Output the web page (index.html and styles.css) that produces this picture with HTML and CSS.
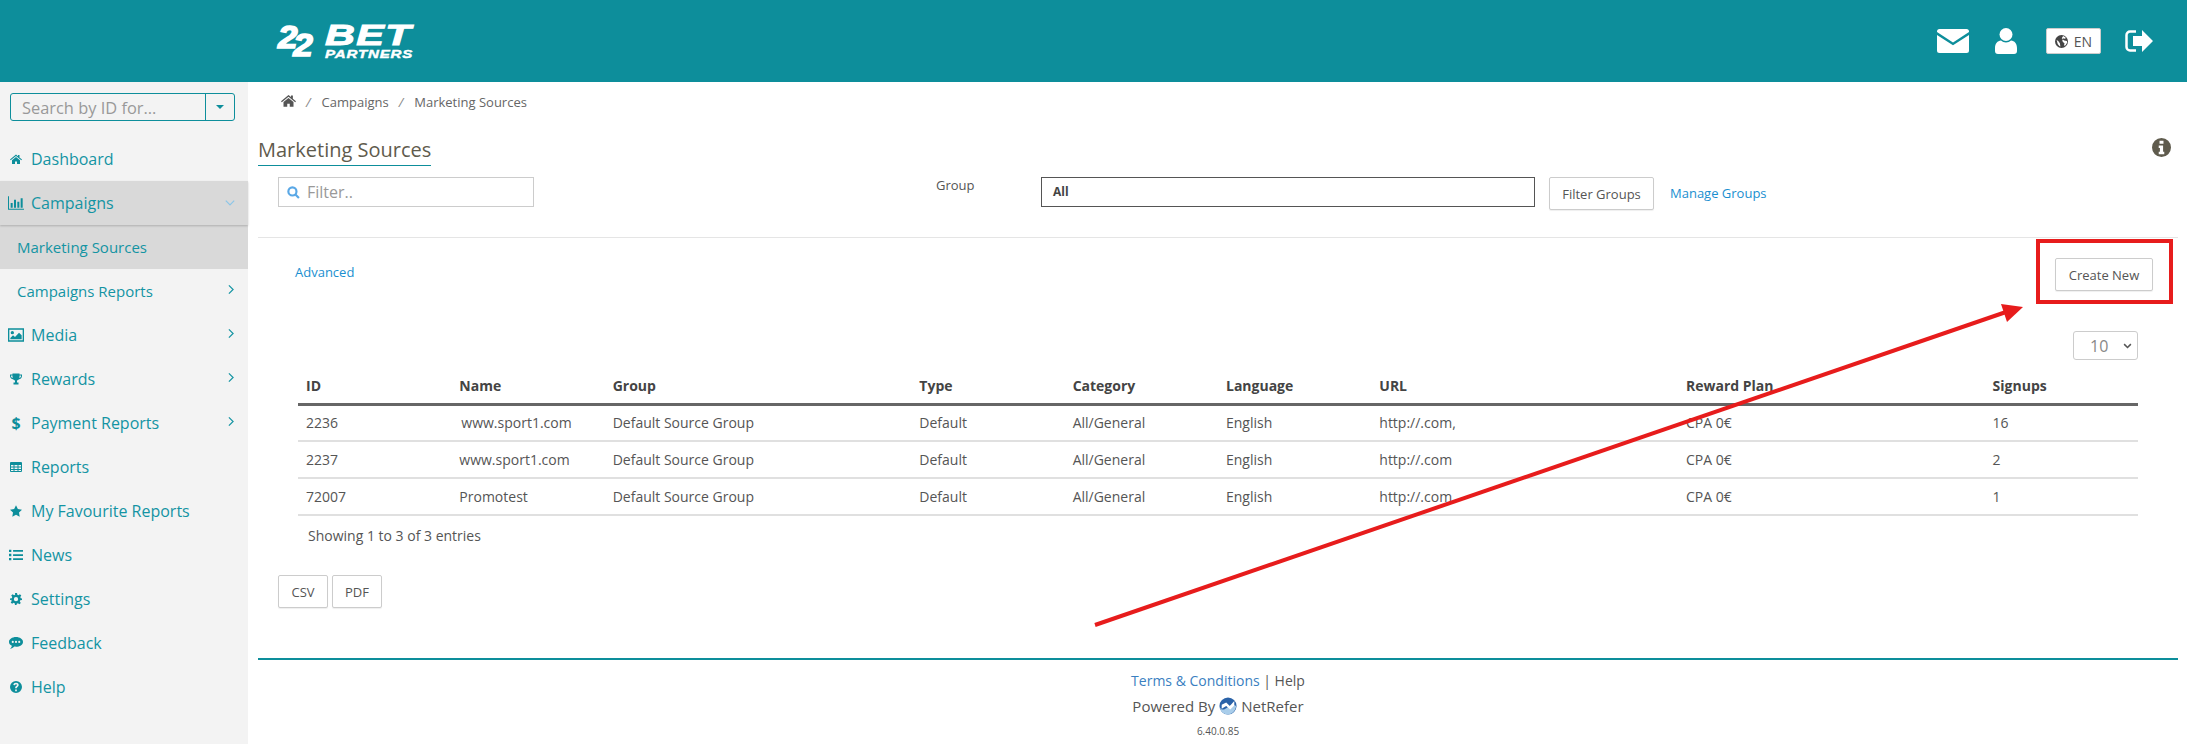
FILE: index.html
```html
<!DOCTYPE html>
<html lang="en">
<head>
  <meta charset="UTF-8">
  <title>Marketing Sources</title>
  <link rel="stylesheet" href="styles.css">
</head>
<body>
  <header class="topbar">
    <a class="logo" href="#">
      <span class="logo-22"><span>2</span><span class="logo-22b">2</span></span>
      <span class="logo-words">
        <span class="logo-bet">BET</span>
        <span class="logo-partners">PARTNERS</span>
      </span>
    </a>
    <div class="top-actions">
      <svg class="top-mail" viewBox="0 0 32 24"><path fill="#fff" d="M2.500 0h27A2.500 2.500 0 0 1 32 2.500v.6L16 13.400 0 3.100v-.6A2.500 2.500 0 0 1 2.500 0zM0 6l16 10.300L32 6v15.500a2.500 2.500 0 0 1-2.500 2.500h-27A2.500 2.500 0 0 1 0 21.500z"/></svg>
      <svg class="top-user" viewBox="0 0 22 26"><circle fill="#fff" cx="11" cy="6.500" r="6.500"/><path fill="#fff" d="M6 12.500c1.300 1.300 3 2 5 2s3.700-.7 5-2c3.500.3 6 3.200 6 7.500v3a3 3 0 0 1-3 3H3a3 3 0 0 1-3-3v-3c0-4.300 2.500-7.200 6-7.500z"/></svg>
      <button class="lang-btn">
        <svg class="lang-globe" viewBox="0 0 24 24"><circle fill="#444" cx="12" cy="12" r="12"/><path fill="#fff" d="M15 2l4 2 1 2-3 1-2-1-1 2 3 2 5 1 .5 3-3 5-3 1 1-5-3-2-1-3 1-2-2-2 1-2zM3 9l3 2 3 4 1 6-2-.500-3-4z"/></svg>
        <span>EN</span>
      </button>
      <svg class="top-exit" viewBox="0 0 28 22"><path fill="#fff" d="M17 0l11 11-11 11v-6H8V6h9z"/><path fill="none" stroke="#fff" stroke-width="2.500" d="M11 1.500H5A3.500 3.500 0 0 0 1.500 5v12A3.500 3.500 0 0 0 5 20.500h6"/></svg>
    </div>
  </header>

  <div class="layout">
    <aside class="sidebar">
      <div class="side-search">
        <input class="side-search-input" type="text" placeholder="Search by ID for...">
        <span class="side-search-btn"><i class="caret"></i></span>
      </div>
      <nav class="side-nav">
        <a class="nav-item" href="#">
          <svg class="nav-icon nav-icon-sm" viewBox="0 0 24 20"><path d="M12 1l4 3.400V2h3v5l5 4.200-1.300 1.400L12 3.800 1.300 12.600 0 11.200zM4 12.500l8-6.500 8 6.500V20h-6v-5h-4v5H4z"/></svg>
          <span>Dashboard</span>
        </a>
        <a class="nav-item is-open" href="#">
          <svg class="nav-icon" viewBox="0 0 24 20"><path d="M0 0h1.500v18.500H24V20H0zM4 10h3v7H4zM9 5h3v12H9zM14 8h3v9h-3zM19 3h3v14h-3z"/></svg>
          <span>Campaigns</span>
          <svg class="nav-arrow arrow-down" viewBox="0 0 16 10"><path d="M1 1l7 7 7-7"/></svg>
        </a>
        <a class="nav-sub is-active" href="#">Marketing Sources</a>
        <a class="nav-sub" href="#">
          <span>Campaigns Reports</span>
          <svg class="nav-arrow" viewBox="0 0 10 16"><path d="M1.500 1l7 7-7 7"/></svg>
        </a>
        <a class="nav-item" href="#">
          <svg class="nav-icon" viewBox="0 0 24 20"><path fill-rule="evenodd" d="M0 0h24v20H0zM2 2v16h20V2zM3.500 16.500v-2l4-4 3 2.500 6-6.500 4 4v6zM6.500 4a2.500 2.500 0 1 1 0 5 2.500 2.500 0 0 1 0-5z"/></svg>
          <span>Media</span>
          <svg class="nav-arrow" viewBox="0 0 10 16"><path d="M1.500 1l7 7-7 7"/></svg>
        </a>
        <a class="nav-item" href="#">
          <svg class="nav-icon nav-icon-sm" viewBox="0 0 24 22"><path fill-rule="evenodd" d="M5 0h14v2h5v3c0 3.500-3 6-6 6.500-1 1.300-2.500 2.300-4 2.700V18h3v4H7v-4h3v-3.800c-1.500-.4-3-1.400-4-2.700C3 11 0 8.500 0 5V2h5zM2 4v1c0 2 1.500 3.500 3.300 4.200C5 7.500 5 5.800 5 4zM22 4h-3c0 1.800 0 3.500-.3 5.200C20.500 8.500 22 7 22 5z"/></svg>
          <span>Rewards</span>
          <svg class="nav-arrow" viewBox="0 0 10 16"><path d="M1.500 1l7 7-7 7"/></svg>
        </a>
        <a class="nav-item" href="#">
          <span class="nav-dollar">$</span>
          <span>Payment Reports</span>
          <svg class="nav-arrow" viewBox="0 0 10 16"><path d="M1.500 1l7 7-7 7"/></svg>
        </a>
        <a class="nav-item" href="#">
          <svg class="nav-icon nav-icon-sm" viewBox="0 0 24 20"><path fill-rule="evenodd" d="M2 0h20a2 2 0 0 1 2 2v16a2 2 0 0 1-2 2H2a2 2 0 0 1-2-2V2a2 2 0 0 1 2-2zM2 6v3h5V6zM9 6v3h6V6zM17 6v3h5V6zM2 11v3h5v-3zM9 11v3h6v-3zM17 11v3h5v-3zM2 16v2h5v-2zM9 16v2h6v-2zM17 16v2h5v-2z"/></svg>
          <span>Reports</span>
        </a>
        <a class="nav-item" href="#">
          <svg class="nav-icon nav-icon-sm" viewBox="0 0 24 23"><path d="M12 0l3.700 7.600 8.300 1.200-6 5.800 1.400 8.400-7.400-4-7.400 4L6 14.600 0 8.800l8.300-1.200z"/></svg>
          <span>My Favourite Reports</span>
        </a>
        <a class="nav-item" href="#">
          <svg class="nav-icon nav-icon-md" viewBox="0 0 24 20"><path d="M0 1h4v4H0zM7 1.500h17v3H7zM0 8h4v4H0zM7 8.500h17v3H7zM0 15h4v4H0zM7 15.500h17v3H7z"/></svg>
          <span>News</span>
        </a>
        <a class="nav-item" href="#">
          <svg class="nav-icon nav-icon-sm" viewBox="0 0 24 24"><path fill-rule="evenodd" d="M10 0h4l.7 3.500 2.100.9 3-2 2.800 2.800-2 3 .9 2.100L24 11v3l-3.500.7-.9 2.100 2 3-2.800 2.800-3-2-2.100.9L13 24h-3l-.7-3.500-2.100-.9-3 2-2.800-2.800 2-3-.9-2.100L0 14v-3l3.500-.7.9-2.100-2-3 2.800-2.800 3 2 2.100-.9zM12 8a4.300 4.300 0 1 0 0 8.600A4.300 4.300 0 0 0 12 8z"/></svg>
          <span>Settings</span>
        </a>
        <a class="nav-item" href="#">
          <svg class="nav-icon nav-icon-md" viewBox="0 0 26 22"><path fill-rule="evenodd" d="M13 0c7.200 0 13 4 13 9s-5.800 9-13 9c-1 0-2-.1-3-.3C8 20 5 21.500 2 22c1.500-1.500 3-3.500 3.300-6C2 14.400 0 11.900 0 9c0-5 5.800-9 13-9zM7 7a2 2 0 1 0 0 4 2 2 0 0 0 0-4zM13 7a2 2 0 1 0 0 4 2 2 0 0 0 0-4zM19 7a2 2 0 1 0 0 4 2 2 0 0 0 0-4z"/></svg>
          <span>Feedback</span>
        </a>
        <a class="nav-item" href="#">
          <svg class="nav-icon nav-icon-sm" viewBox="0 0 24 24"><path fill-rule="evenodd" d="M12 0a12 12 0 1 1 0 24 12 12 0 0 1 0-24zM10.300 17v3.500h3.400V17zM12 3.500c-3 0-5 1.700-5.300 4.500l3.300.5c.2-1.300.9-2 2-2 1.200 0 1.900.7 1.900 1.600 0 .8-.5 1.300-1.500 2-1.500 1-2.100 2-2.100 3.400v1h3.400v-.7c0-.8.400-1.200 1.300-1.800 1.500-1 2.400-2.200 2.400-3.900 0-2.800-2.300-4.600-5.400-4.600z"/></svg>
          <span>Help</span>
        </a>
      </nav>
    </aside>

    <main class="content">
      <div class="breadcrumb">
        <svg class="crumb-home" viewBox="0 0 24 20"><path d="M12 1l4 3.400V2h3v5l5 4.200-1.300 1.400L12 3.800 1.300 12.600 0 11.200zM4 12.500l8-6.500 8 6.500V20h-6v-5h-4v5H4z"/></svg>
        <span class="crumb-sep">/</span>
        <span>Campaigns</span>
        <span class="crumb-sep">/</span>
        <span>Marketing Sources</span>
      </div>

      <div class="title-row">
        <h1 class="page-title">Marketing Sources</h1>
        <svg class="info-icon" viewBox="0 0 24 24"><path fill-rule="evenodd" d="M12 0a12 12 0 1 1 0 24 12 12 0 0 1 0-24zM9.500 3.500v3.800h5V3.500zM8.500 9.500v3h1.500v5H8.500v3h7v-3H14v-8z"/></svg>
      </div>

      <div class="filter-row">
        <label class="filter-box">
          <svg class="filter-icon" viewBox="0 0 24 24"><circle cx="10" cy="10" r="7.500"/><path d="M15.500 15.500L22 22"/></svg>
          <input class="filter-input" type="text" placeholder="Filter..">
        </label>
        <span class="group-label">Group</span>
        <div class="group-select">All</div>
        <button class="btn btn-filter">Filter Groups</button>
        <a class="link manage-link" href="#">Manage Groups</a>
      </div>

      <div class="action-row">
        <a class="link" href="#">Advanced</a>
        <button class="btn btn-create">Create New</button>
      </div>

      <div class="size-row">
        <div class="size-select">
          <span>10</span>
          <svg class="size-arrow" viewBox="0 0 12 8"><path d="M1.500 1.500L6 6l4.500-4.500"/></svg>
        </div>
      </div>

      <table class="data-table">
        <colgroup>
          <col class="c1"><col class="c1"><col class="c2"><col class="c1"><col class="c1"><col class="c1"><col class="c2"><col class="c2"><col class="c1">
        </colgroup>
        <thead>
          <tr>
            <th>ID</th><th>Name</th><th>Group</th><th>Type</th><th>Category</th><th>Language</th><th>URL</th><th>Reward Plan</th><th>Signups</th>
          </tr>
        </thead>
        <tbody>
          <tr>
            <td>2236</td><td class="name-shift">www.sport1.com</td><td>Default Source Group</td><td>Default</td><td>All/General</td><td>English</td><td>http://.com,</td><td>CPA 0€</td><td>16</td>
          </tr>
          <tr>
            <td>2237</td><td>www.sport1.com</td><td>Default Source Group</td><td>Default</td><td>All/General</td><td>English</td><td>http://.com</td><td>CPA 0€</td><td>2</td>
          </tr>
          <tr>
            <td>72007</td><td>Promotest</td><td>Default Source Group</td><td>Default</td><td>All/General</td><td>English</td><td>http://.com</td><td>CPA 0€</td><td>1</td>
          </tr>
        </tbody>
      </table>
      <div class="table-info">Showing 1 to 3 of 3 entries</div>

      <div class="export-row">
        <button class="btn btn-export">CSV</button>
        <button class="btn btn-export">PDF</button>
      </div>

      <footer class="page-footer">
        <div class="foot-links"><a class="foot-link" href="#">Terms &amp; Conditions</a> | Help</div>
        <div class="foot-powered">
          <span>Powered By</span>
          <svg class="foot-logo" viewBox="0 0 20 20"><circle fill="#2a62a8" cx="10" cy="10" r="9.500"/><path fill="#a9cdea" d="M1 12c3 4 6 1 9-1s6-3 9-1c-.5 5-4.500 9.500-9 9.500S1.500 16 1 12z"/><path fill="#fff" d="M3 8.500L8 6l4 4 5-5.500v5L12.500 14 8 10l-5 3z"/></svg>
          <span>NetRefer</span>
        </div>
        <div class="foot-version">6.40.0.85</div>
      </footer>
    </main>
  </div>

  <!-- annotation drawn on top of the screenshot -->
  <svg class="markup" viewBox="0 0 2187 744">
    <rect class="markup-box" x="2038" y="241" width="133" height="61"/>
    <path class="markup-line" d="M1095 625L2006 312"/>
    <path class="markup-head" d="M2023 307L2001 304L2007 322z"/>
  </svg>
</body>
</html>
```

FILE: styles.css
```css
* { box-sizing: border-box; }
html, body { height: 100%; }
body { margin: 0; background: #fff; color: #555; font-family: "Open Sans", Arial, sans-serif; font-size: 14px; overflow: hidden; position: relative; }
a { text-decoration: none; }

.topbar { height: 82px; background: #0d8e9b; display: flex; align-items: center; justify-content: space-between; padding: 0 34px 0 278px; }
.logo { display: flex; align-items: flex-start; color: #fff; font-family: "Liberation Sans", Arial, sans-serif; font-weight: 700; font-style: italic; height: 36px; }
.logo-22 { display: flex; width: 46px; font-size: 32px; line-height: 28px; transform: scaleX(1.1); transform-origin: left top; -webkit-text-stroke: 1.5px #fff; }
.logo-22b { margin: 8px 0 0 -4px; }
.logo-words { display: flex; flex-direction: column; margin-left: 1px; }
.logo-bet { font-size: 30px; line-height: 24px; height: 26px; width: 56px; letter-spacing: 1px; transform: scaleX(1.38); transform-origin: left top; -webkit-text-stroke: 1px #fff; }
.logo-partners { font-size: 11px; line-height: 10px; letter-spacing: .6px; width: 62px; transform: scaleX(1.37); transform-origin: left top; -webkit-text-stroke: .4px #fff; }

.top-actions { display: flex; align-items: center; }
.top-mail { width: 32px; height: 24px; margin-right: 26px; }
.top-user { width: 22px; height: 26px; margin-right: 29px; }
.top-exit { width: 28px; height: 22px; margin-left: 24px; }
.lang-btn { width: 55px; height: 26px; background: #fff; border: 1px solid #ccc; border-radius: 2px; display: flex; align-items: center; justify-content: center; gap: 6px; padding: 0; color: #555; font: 14px "Open Sans", Arial, sans-serif; }
.lang-globe { width: 13px; height: 13px; }

.layout { display: flex; height: 662px; }
.sidebar { width: 248px; flex: none; background: #f3f3f3; padding-top: 11px; }
.side-search { display: flex; width: 225px; height: 28px; margin-left: 10px; border: 1px solid #0d8e9b; border-radius: 3px; }
.side-search-input { flex: 1; min-width: 0; border: 0; background: transparent; padding: 0 11px; font: 16.4px "Open Sans", Arial, sans-serif; color: #555; outline: none; }
.side-search-input::placeholder { color: #999; opacity: 1; }
.side-search-btn { width: 29px; border-left: 1px solid #0d8e9b; display: flex; align-items: center; justify-content: center; }
.caret { border-left: 4px solid transparent; border-right: 4px solid transparent; border-top: 4px solid #0d8e9b; }

.side-nav { display: flex; flex-direction: column; margin-top: 16px; }
.nav-item, .nav-sub { height: 44px; display: flex; align-items: center; color: #1494a3; font-size: 16px; position: relative; }
.nav-item { padding-left: 8px; }
.nav-sub { padding-left: 17px; font-size: 15px; }
.nav-icon { width: 16px; height: 14px; flex: none; margin-right: 7px; fill: #0d8e9b; }
.nav-icon-sm { padding: 0 2px; }
.nav-icon-md { padding: 0 1px; }
.nav-dollar { width: 16px; margin-right: 7px; text-align: center; font-weight: 700; font-size: 16px; color: #0d8e9b; }
.nav-arrow { width: 6px; height: 11px; position: absolute; right: 14px; top: 15px; fill: none; stroke: #1494a3; stroke-width: 2; }
.arrow-down { width: 10px; height: 6px; right: 13px; top: 19px; stroke: #8cc6e8; }
.is-open, .is-active { background: #d9d9d9; }
.is-open { box-shadow: 0 1px 2px #0003; z-index: 1; }

.content { flex: 1; min-width: 0; padding: 0 9px 0 10px; }
.breadcrumb { height: 40px; display: flex; align-items: center; padding: 0 0 0 23px; font-size: 13px; color: #666; }
.crumb-home { width: 15px; height: 13px; fill: #555; margin-bottom: 3px; }
.crumb-sep { margin: 0 11px 0 10px; color: #888; font-style: italic; }
.title-row { display: flex; justify-content: space-between; align-items: flex-start; height: 55px; }
.page-title { margin: 15px 0 0; padding-bottom: 2px; height: 29px; font-size: 20px; line-height: 26px; font-weight: 400; color: #5f5b4d; border-bottom: 1px solid #0d8e9b; }
.info-icon { width: 19px; height: 19px; fill: #5f5b4d; margin: 16px 7px 0 0; }

.filter-row { display: flex; align-items: flex-start; height: 60px; padding-left: 20px; }
.filter-box { width: 256px; height: 30px; border: 1px solid #ccc; display: flex; align-items: center; padding-left: 8px; }
.filter-icon { width: 13px; height: 13px; fill: none; stroke: #5aa8e6; stroke-width: 4; flex: none; }
.filter-input { border: 0; outline: none; flex: 1; min-width: 0; padding: 0 0 0 7px; font: 16px "Open Sans", Arial, sans-serif; background: transparent; }
.filter-input::placeholder { color: #999; opacity: 1; }
.group-label { margin: 0 0 0 402px; width: 105px; font-size: 13px; line-height: 16px; }
.group-select { width: 494px; height: 30px; border: 1px solid #555; font-size: 12px; font-weight: 700; line-height: 28px; padding-left: 11px; color: #444; }
.btn { background: #fff; border: 1px solid #ccc; border-radius: 2px; box-shadow: 0 1px 1px #0001; color: #555; font: 13px "Open Sans", Arial, sans-serif; padding: 0; }
.btn-filter { width: 105px; height: 33px; margin-left: 14px; }
.link { color: #1a8fd0; font-size: 13px; }
.manage-link { margin: 7px 0 0 16px; }

.action-row { display: flex; justify-content: space-between; align-items: flex-start; height: 94px; padding: 0 25px 0 37px; border-top: 1px solid #e5e5e5; }
.action-row .link { margin-top: 25px; }
.btn-create { width: 98px; height: 33px; margin-top: 20px; }
.size-row { display: flex; justify-content: flex-end; height: 38px; padding-right: 40px; }
.size-select { width: 65px; height: 29px; border: 1px solid #ccc; border-radius: 3px; display: flex; align-items: center; justify-content: space-between; padding: 0 5px 0 16px; font-size: 16px; color: #888; }
.size-arrow { width: 9px; height: 6px; fill: none; stroke: #555; stroke-width: 2; }

.data-table { width: 1840px; margin-left: 40px; border-collapse: collapse; table-layout: fixed; font-size: 14px; color: #555; }
.c1 { width: 153.33px; }
.c2 { width: 306.66px; }
.data-table th { height: 35px; padding: 0 8px; text-align: left; font-weight: 700; color: #444; border-bottom: 3px solid #666; }
.data-table td { height: 37px; padding: 0 8px; border-bottom: 2px solid #e0e0e0; }
.name-shift { text-indent: 2px; }
.table-info { padding: 10px 50px 0; height: 59px; font-size: 14px; }
.export-row { display: flex; gap: 4px; padding-left: 20px; height: 83px; }
.btn-export { width: 50px; height: 33px; }
.page-footer { border-top: 2px solid #0d8e9b; text-align: center; padding: 10px 0 0; font-size: 14px; line-height: 22px; color: #555; }
.foot-link { color: #3a80c1; }
.foot-powered { display: flex; align-items: center; justify-content: center; gap: 4px; margin-top: 3px; font-size: 15px; }
.foot-logo { width: 18px; height: 18px; }
.foot-version { font-size: 10px; margin-top: 3px; }

.markup { position: absolute; left: 0; top: 0; width: 2187px; height: 744px; pointer-events: none; }
.markup-box { fill: none; stroke: #e71c1c; stroke-width: 4; }
.markup-line { fill: none; stroke: #e71c1c; stroke-width: 4; }
.markup-head { fill: #e71c1c; }
```
